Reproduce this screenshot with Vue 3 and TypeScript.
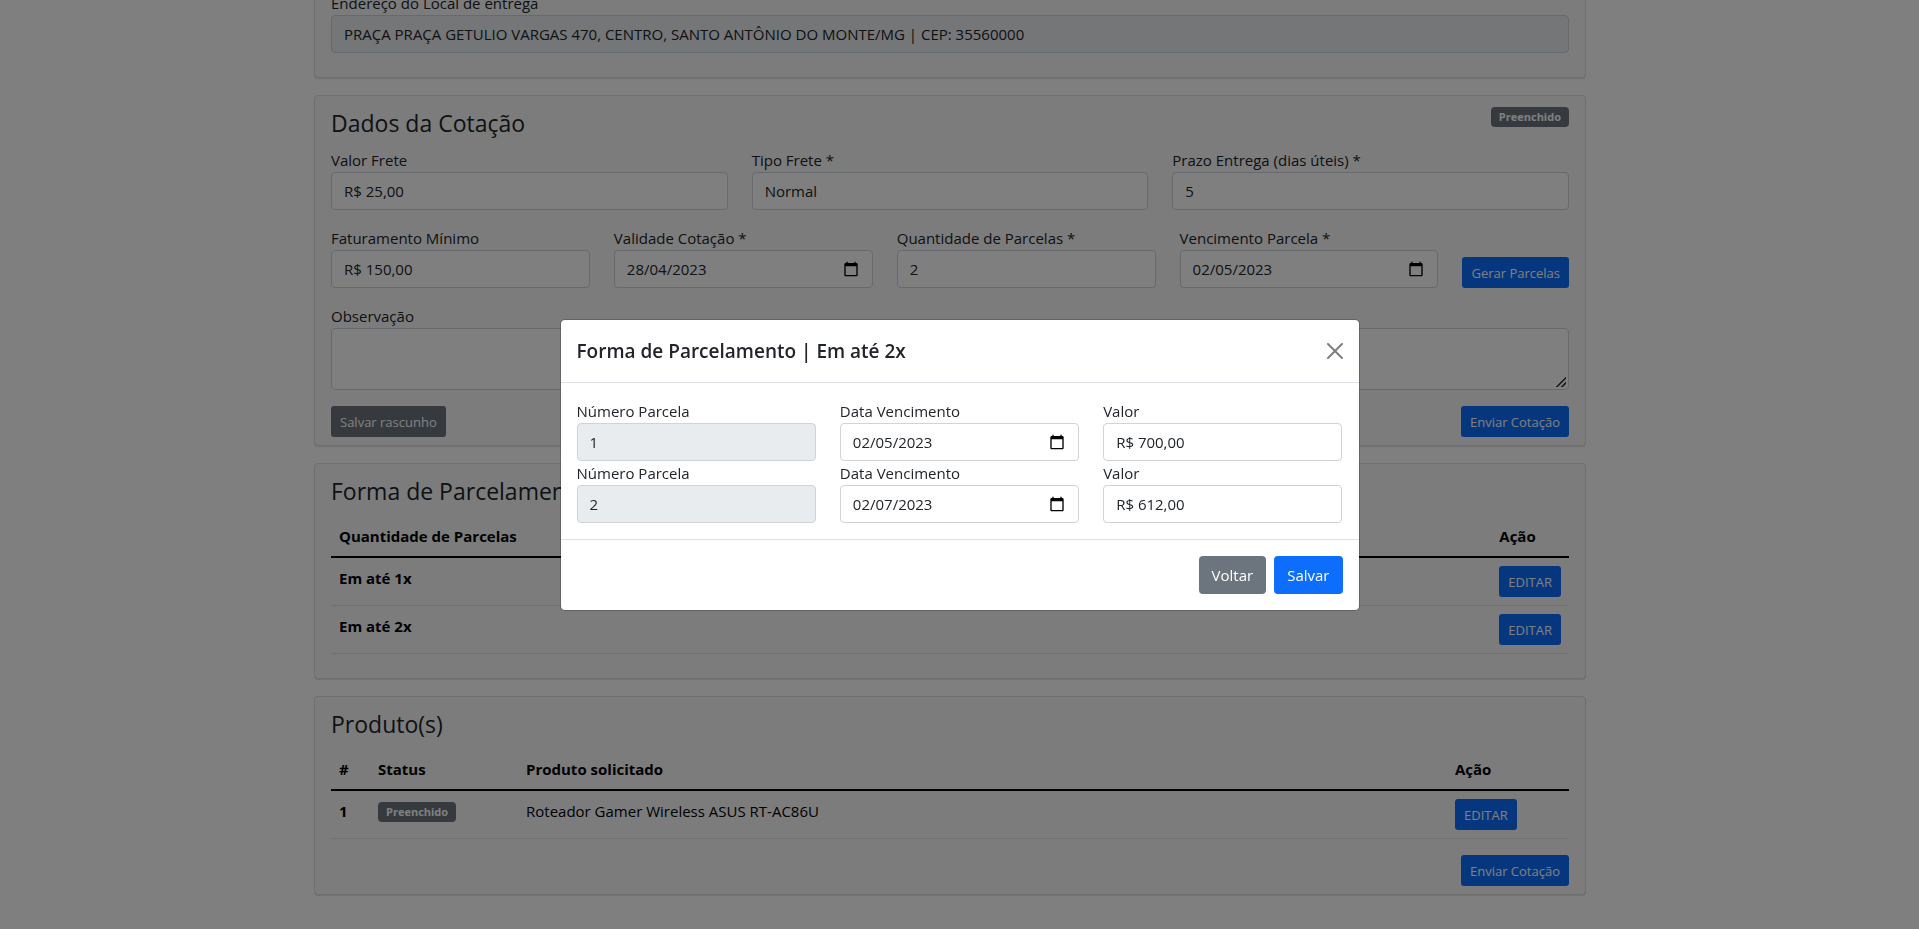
<script setup lang="ts">
import { reactive, ref } from 'vue'

interface Installment {
  number: number
  dueDate: string
  amount: string
}

const address = ref('PRAÇA PRAÇA GETULIO VARGAS 470, CENTRO, SANTO ANTÔNIO DO MONTE/MG | CEP: 35560000')

const quote = reactive({
  freight: 'R$ 25,00',
  freightType: 'Normal',
  deliveryDays: '5',
  minimumBilling: 'R$ 150,00',
  validUntil: '28/04/2023',
  installmentCount: '2',
  installmentDue: '02/05/2023',
  notes: '',
})

const plans = ['Em até 1x', 'Em até 2x']
const products = [{ id: 1, status: 'Preenchido', name: 'Roteador Gamer Wireless ASUS RT-AC86U' }]

const installments = reactive<Installment[]>([
  { number: 1, dueDate: '02/05/2023', amount: 'R$ 700,00' },
  { number: 2, dueDate: '02/07/2023', amount: 'R$ 612,00' },
])

const modalOpen = ref(true)
const calendarPath =
  'M20 3h-1V1h-2v2H7V1H5v2H4c-1.1 0-2 .9-2 2v16c0 1.1.9 2 2 2h16c1.1 0 2-.9 2-2V5c0-1.1-.9-2-2-2zm0 18H4V8h16v13z'
</script>

<template>
  <div class="viewport">
    <main class="page">
      <section class="card">
        <div class="field">
          <label for="address">Endereço do Local de entrega</label>
          <input id="address" v-model="address" class="control" type="text" disabled />
        </div>
      </section>

      <section class="card">
        <header class="card-head">
          <h2>Dados da Cotação</h2>
          <span class="badge">Preenchido</span>
        </header>

        <div class="row">
          <div class="field">
            <label for="freight">Valor Frete</label>
            <input id="freight" v-model="quote.freight" class="control" type="text" />
          </div>
          <div class="field">
            <label for="freight-type">Tipo Frete *</label>
            <select id="freight-type" v-model="quote.freightType" class="control">
              <option>Normal</option>
              <option>Expresso</option>
            </select>
          </div>
          <div class="field">
            <label for="delivery">Prazo Entrega (dias úteis) *</label>
            <input id="delivery" v-model="quote.deliveryDays" class="control" type="text" inputmode="numeric" />
          </div>
        </div>

        <div class="row">
          <div class="field">
            <label for="minimum">Faturamento Mínimo</label>
            <input id="minimum" v-model="quote.minimumBilling" class="control" type="text" />
          </div>
          <div class="field">
            <label for="valid">Validade Cotação *</label>
            <div class="date">
              <input id="valid" v-model="quote.validUntil" class="control" type="text" />
              <button type="button" class="date-button" aria-label="Abrir calendário">
                <svg viewBox="0 0 24 24" aria-hidden="true"><path :d="calendarPath" /></svg>
              </button>
            </div>
          </div>
          <div class="field">
            <label for="count">Quantidade de Parcelas *</label>
            <input id="count" v-model="quote.installmentCount" class="control" type="text" inputmode="numeric" />
          </div>
          <div class="field">
            <label for="due">Vencimento Parcela *</label>
            <div class="date">
              <input id="due" v-model="quote.installmentDue" class="control" type="text" />
              <button type="button" class="date-button" aria-label="Abrir calendário">
                <svg viewBox="0 0 24 24" aria-hidden="true"><path :d="calendarPath" /></svg>
              </button>
            </div>
          </div>
          <button type="button" class="btn btn-sm primary">Gerar Parcelas</button>
        </div>

        <div class="field">
          <label for="notes">Observação</label>
          <textarea id="notes" v-model="quote.notes" class="control" rows="2"></textarea>
        </div>

        <div class="actions">
          <button type="button" class="btn btn-sm secondary">Salvar rascunho</button>
          <button type="button" class="btn btn-sm primary">Enviar Cotação</button>
        </div>
      </section>

      <section class="card">
        <header class="card-head">
          <h2>Forma de Parcelamento</h2>
        </header>
        <table>
          <thead>
            <tr>
              <th scope="col">Quantidade de Parcelas</th>
              <th scope="col" class="fit">Ação</th>
            </tr>
          </thead>
          <tbody>
            <tr v-for="plan in plans" :key="plan">
              <th scope="row">{{ plan }}</th>
              <td>
                <button type="button" class="btn btn-sm primary" @click="modalOpen = true">EDITAR</button>
              </td>
            </tr>
          </tbody>
        </table>
      </section>

      <section class="card">
        <header class="card-head">
          <h2>Produto(s)</h2>
        </header>
        <table>
          <thead>
            <tr>
              <th scope="col" class="col-id">#</th>
              <th scope="col" class="col-status">Status</th>
              <th scope="col">Produto solicitado</th>
              <th scope="col" class="col-action">Ação</th>
            </tr>
          </thead>
          <tbody>
            <tr v-for="product in products" :key="product.id">
              <th scope="row">{{ product.id }}</th>
              <td><span class="badge">{{ product.status }}</span></td>
              <td>{{ product.name }}</td>
              <td><button type="button" class="btn btn-sm primary">EDITAR</button></td>
            </tr>
          </tbody>
        </table>
        <div class="actions end">
          <button type="button" class="btn btn-sm primary">Enviar Cotação</button>
        </div>
      </section>
    </main>

    <div v-if="modalOpen" class="backdrop">
      <div class="modal" role="dialog" aria-modal="true" aria-labelledby="modal-title">
        <header class="modal-head">
          <h1 id="modal-title">Forma de Parcelamento | Em até 2x</h1>
          <button type="button" class="close" aria-label="Fechar" @click="modalOpen = false">
            <svg viewBox="0 0 16 16" aria-hidden="true">
              <path
                d="M.293.293a1 1 0 011.414 0L8 6.586 14.293.293a1 1 0 111.414 1.414L9.414 8l6.293 6.293a1 1 0 01-1.414 1.414L8 9.414l-6.293 6.293a1 1 0 01-1.414-1.414L6.586 8 .293 1.707a1 1 0 010-1.414z"
              />
            </svg>
          </button>
        </header>
        <div class="modal-body">
          <div v-for="item in installments" :key="item.number" class="row">
            <div class="field">
              <label :for="`number-${item.number}`">Número Parcela</label>
              <input :id="`number-${item.number}`" :value="item.number" class="control" type="text" disabled />
            </div>
            <div class="field">
              <label :for="`date-${item.number}`">Data Vencimento</label>
              <div class="date">
                <input :id="`date-${item.number}`" v-model="item.dueDate" class="control" type="text" />
                <button type="button" class="date-button" aria-label="Abrir calendário">
                  <svg viewBox="0 0 24 24" aria-hidden="true"><path :d="calendarPath" /></svg>
                </button>
              </div>
            </div>
            <div class="field">
              <label :for="`amount-${item.number}`">Valor</label>
              <input :id="`amount-${item.number}`" v-model="item.amount" class="control" type="text" />
            </div>
          </div>
        </div>
        <footer class="modal-foot">
          <button type="button" class="btn secondary" @click="modalOpen = false">Voltar</button>
          <button type="button" class="btn primary">Salvar</button>
        </footer>
      </div>
    </div>
  </div>
</template>

<style>
body {
  margin: 0;
  background: #fff;
}
</style>

<style scoped>
.viewport,
.viewport *,
.viewport *::before {
  box-sizing: border-box;
}

.viewport {
  height: 100vh;
  overflow: hidden;
  padding-right: 19px;
  color: #212529;
  font: 400 15px/24px 'Open Sans', 'Noto Sans', sans-serif;
}

/* The form is scrolled past the top of its first card. */
.page {
  display: flex;
  flex-direction: column;
  gap: 17px;
  max-width: 1272px;
  margin: -26px auto 0;
}

.card {
  padding: 16px 16px 8px;
  border: 1px solid #dfdfe1;
  border-radius: 4px;
  background: #f8f8fa;
  box-shadow: 0 1px 1px rgba(0, 0, 0, 0.12);
}

.card-head {
  display: flex;
  align-items: flex-start;
  justify-content: space-between;
  height: 28px;
  margin-bottom: 8px;
}

.card-head .badge {
  margin-top: -5px;
}

h1,
h2 {
  margin: 0;
}

h2 {
  font-size: 23px;
  font-weight: 400;
  line-height: 22px;
}

.row {
  display: flex;
  align-items: flex-end;
  gap: 24px;
  margin-bottom: 16px;
}

.field {
  flex: 1 1 0;
  min-width: 0;
}

.card > .field {
  margin-bottom: 16px;
}

label {
  display: block;
}

.control {
  display: block;
  width: 100%;
  height: 38px;
  margin: 0;
  padding: 6px 12px;
  border: 1px solid #ced4da;
  border-radius: 4px;
  background: #fff;
  color: #212529;
  font: inherit;
  appearance: none;
  opacity: 1;
}

.control:disabled {
  background: #e9ecef;
}

textarea.control {
  height: 62px;
  resize: vertical;
}

textarea.control::-webkit-resizer {
  background: linear-gradient(
      135deg,
      transparent 57%,
      #444 58%,
      #444 66%,
      transparent 67%,
      transparent 78%,
      #444 79%,
      #444 87%,
      transparent 88%
    )
    1px 1px / 12px 12px no-repeat;
}

.date {
  position: relative;
}

.date-button {
  position: absolute;
  top: 11px;
  right: 14px;
  width: 16px;
  height: 16px;
  padding: 0;
  border: 0;
  background: none;
}

.date-button svg,
.close svg {
  display: block;
  width: 16px;
  height: 16px;
}

.btn {
  flex: none;
  display: block;
  height: 38px;
  padding: 0 12px;
  border: 1px solid transparent;
  border-radius: 4px;
  color: #fff;
  font: inherit;
  cursor: pointer;
}

.btn-sm {
  height: 31px;
  padding: 0 8px;
  border-radius: 3px;
  font-size: 13px;
}

.primary {
  background-color: #0d6efd;
}

.secondary {
  background-color: #6c757d;
}

.badge {
  display: block;
  width: max-content;
  height: 20px;
  padding: 0 8px;
  border-radius: 4px;
  background: #6c757d;
  color: #fff;
  font-size: 11px;
  font-weight: 700;
  line-height: 20px;
}

.actions {
  display: flex;
  justify-content: space-between;
}

.actions.end {
  justify-content: flex-end;
}

table {
  width: 100%;
  margin-bottom: 16px;
  border-collapse: separate;
  border-spacing: 0;
  color: #000;
}

th,
td {
  padding: 8px;
  border-bottom: 1px solid #dee2e6;
  text-align: left;
  vertical-align: top;
}

th {
  font-weight: 700;
}

thead th {
  border-bottom: 2px solid #000;
}

.fit {
  width: 1px;
}

.col-id {
  width: 39px;
}

.col-status {
  width: 148px;
}

.col-action {
  width: 122px;
}

td .badge {
  margin-top: 3px;
}

.backdrop {
  position: fixed;
  inset: 0;
  display: flex;
  align-items: center;
  justify-content: center;
  background: rgba(0, 0, 0, 0.5);
}

.modal {
  width: 100%;
  max-width: 800px;
  border: 1px solid rgba(0, 0, 0, 0.2);
  border-radius: 5px;
  background: #fff;
  background-clip: padding-box;
}

.modal-head {
  display: flex;
  align-items: center;
  justify-content: space-between;
  padding: 16px;
  border-bottom: 1px solid #dee2e6;
}

h1 {
  font-size: 19px;
  font-weight: 600;
  line-height: 30px;
}

.close {
  padding: 0;
  border: 0;
  background: none;
  opacity: 0.5;
  cursor: pointer;
}

.modal-body {
  padding: 16px;
}

.modal-body .row {
  margin-bottom: 0;
}

.modal-foot {
  display: flex;
  justify-content: flex-end;
  gap: 8px;
  padding: 16px;
  border-top: 1px solid #dee2e6;
}
</style>
